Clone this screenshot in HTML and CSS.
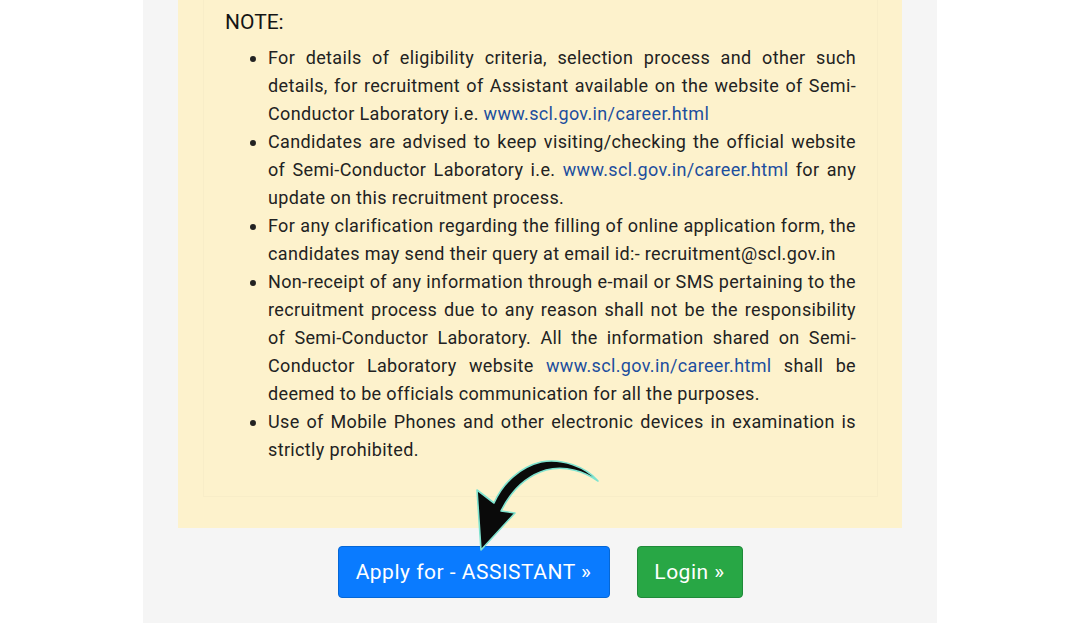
FILE: index.html
```html
<!DOCTYPE html>
<html lang="en">
<head>
<meta charset="utf-8">
<title>SCL Recruitment - Assistant</title>
<link rel="stylesheet" href="styles.css">
</head>
<body>
<div class="page">
  <div class="notice">
    <div class="notice-inner">
      <div class="note-title">NOTE:</div>
      <ul class="note-list">
        <li>For details of eligibility criteria, selection process and other such details, for recruitment of Assistant available on the website of Semi-Conductor Laboratory i.e. <a href="#">www.scl.gov.in/career.html</a></li>
        <li>Candidates are advised to keep visiting/checking the official website of Semi-Conductor Laboratory i.e. <a href="#">www.scl.gov.in/career.html</a> for any update on this recruitment process.</li>
        <li>For any clarification regarding the filling of online application form, the candidates may send their query at email id:- recruitment@scl.gov.in</li>
        <li>Non-receipt of any information through e-mail or SMS pertaining to the recruitment process due to any reason shall not be the responsibility of Semi-Conductor Laboratory. All the information shared on Semi-Conductor Laboratory website <a href="#">www.scl.gov.in/career.html</a> shall be deemed to be officials communication for all the purposes.</li>
        <li>Use of Mobile Phones and other electronic devices in examination is strictly prohibited.</li>
      </ul>
    </div>
  </div>
  <div class="actions">
    <a class="btn btn-primary" href="#">Apply for - ASSISTANT »</a>
    <a class="btn btn-success" href="#">Login »</a>
  </div>
  <svg class="arrow" viewBox="470 455 135 100" width="135" height="100" aria-hidden="true">
    <path d="M598,481 C586,467 562,458 541,462 C520,467 503,483 494,503 L477,490 L481,550 L515,513 L501,511 C511,491 526,476 546,470 C566,465 585,472 598,481 Z" fill="#0a0a0a" stroke="#7fe3cf" stroke-width="1.6" stroke-linejoin="round"/>
  </svg>
</div>
</body>
</html>
```
FILE: styles.css
```css
html, body {
  margin: 0;
  padding: 0;
  background: #ffffff;
}
body {
  font-family: Roboto, "Noto Sans", Arial, sans-serif;
  color: #212121;
  width: 1080px;
  height: 623px;
  overflow: hidden;
}
.page {
  position: relative;
  margin-left: 143px;
  width: 794px;
  height: 623px;
  box-sizing: border-box;
  padding: 0 35px;
  background: #f5f5f5;
}
.notice {
  background: #fdf2cc;
  padding: 0 24px 31px 25px;
}
.notice-inner {
  border: 1px solid rgba(0, 0, 0, 0.02);
  border-top: none;
  padding: 8px 21px 32px 21px;
}
.note-title {
  font-size: 21px;
  line-height: 28px;
  color: #151515;
}
.note-list {
  margin: 8px 0 0 0;
  padding-left: 43px;
  font-size: 18px;
  line-height: 28px;
  letter-spacing: 0.35px;
  text-align: justify;
  color: #222222;
}
.note-list a {
  color: #1c4e9e;
  text-decoration: none;
}
.actions {
  display: flex;
  justify-content: center;
  gap: 27px;
  margin-top: 18px;
}
.btn {
  display: flex;
  align-items: center;
  justify-content: center;
  height: 52px;
  box-sizing: border-box;
  border-radius: 4px;
  color: #ffffff;
  text-decoration: none;
  font-size: 21px;
  letter-spacing: 0.5px;
}
.btn-primary {
  width: 272px;
  background: #0a7bff;
  border: 1px solid #0567d6;
}
.btn-success {
  width: 106px;
  background: #28a745;
  border: 1px solid #1f8a39;
}
.arrow {
  position: absolute;
  left: 327px;
  top: 455px;
  overflow: visible;
}
```
